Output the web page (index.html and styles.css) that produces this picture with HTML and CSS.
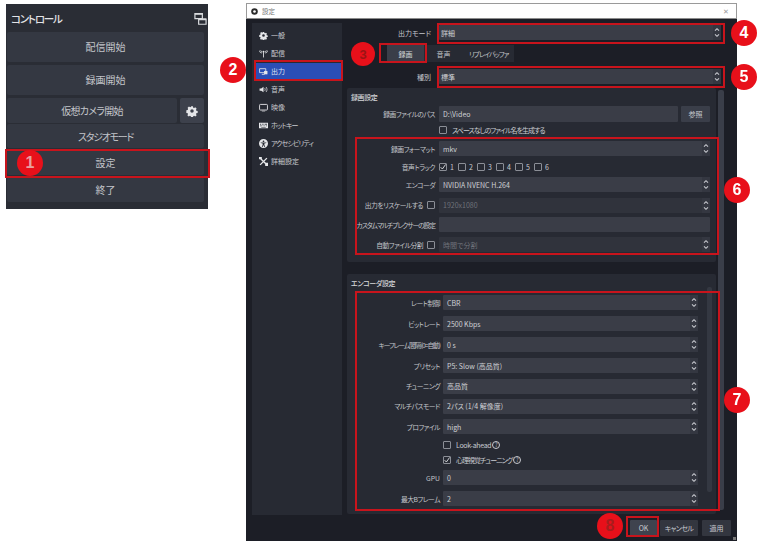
FILE: index.html
```html
<!DOCTYPE html>
<html lang="ja">
<head>
<meta charset="utf-8">
<title>設定</title>
<link rel="stylesheet" href="styles.css">
</head>
<body>
<svg class="defs" width="0" height="0" aria-hidden="true">
  <symbol id="i-gear" viewBox="0 0 16 16"><path fill="currentColor" fill-rule="evenodd" d="M6.6 1h2.8l.4 2 1.3.6 1.8-1.1 2 2-1.1 1.8.6 1.3 2 .4v2.8l-2 .4-.6 1.3 1.1 1.8-2 2-1.8-1.1-1.3.6-.4 2H6.600l-.4-2-1.300-.6-1.800 1.100-2-2 1.100-1.800-.6-1.300-2-.4V6.800l2-.4.6-1.300L1.500 3.300l2-2 1.800 1.100 1.300-.6zM8 5.400a2.600 2.600 0 1 0 0 5.200 2.600 2.600 0 0 0 0-5.200z" transform="translate(.8 .8) scale(.9)"/></symbol>
  <symbol id="i-ant" viewBox="0 0 16 16"><path fill="none" stroke="currentColor" stroke-width="1.500" d="M8 6v9M1 3c0 3 2 4 4 4M15 3c0 3-2 4-4 4M3 2.500c0 1.500 1 2.500 2 2.500M13 2.500c0 1.500-1 2.500-2 2.500"/><circle cx="8" cy="5" r="1.800" fill="currentColor"/></symbol>
  <symbol id="i-out" viewBox="0 0 16 16"><path fill="none" stroke="currentColor" stroke-width="1.500" d="M1 3h11v7H1zM5 13h5"/><path fill="currentColor" d="M9 7h6v6H9z"/></symbol>
  <symbol id="i-audio" viewBox="0 0 16 16"><path fill="currentColor" d="M1 6h3l4-3v10L4 10H1z"/><path fill="none" stroke="currentColor" stroke-width="1.300" d="M10 5.500c1.300 1.500 1.300 3.500 0 5M12.500 3.500c2.300 2.500 2.300 6.500 0 9"/></symbol>
  <symbol id="i-video" viewBox="0 0 16 16"><rect x="1" y="2.500" width="14" height="10" rx="1.500" fill="none" stroke="currentColor" stroke-width="1.600"/><path stroke="currentColor" d="M5 14.500h6"/></symbol>
  <symbol id="i-key" viewBox="0 0 16 16"><path fill="currentColor" fill-rule="evenodd" d="M0 3h16v10H0zm2 2v1.500h1.500V5zm3 0v1.500h1.500V5zm3 0v1.500h1.500V5zm3 0v1.500h3V5zM2 8v1.500h3V8zm4.500 0v1.500H8V8zm3 0v1.500H11V8zm3 0v1.500H14V8zM4 11v1h8v-1z"/></symbol>
  <symbol id="i-acc" viewBox="0 0 16 16"><path fill="currentColor" fill-rule="evenodd" d="M8 0a8 8 0 1 1 0 16A8 8 0 0 1 8 0zm0 2.500a1.500 1.500 0 1 0 0 3 1.500 1.500 0 0 0 0-3zM3 6v1.300l3.500.7v2L5 14l1.300.4L8 10.800l1.700 3.600L11 14l-1.500-4V8l3.500-.7V6z"/></symbol>
  <symbol id="i-tool" viewBox="0 0 16 16"><path fill="none" stroke="currentColor" stroke-width="2.400" d="M2 14L14 2M3 3l10 10"/><path fill="currentColor" d="M0 0h5v4H0zM11 10h5v6h-5z"/></symbol>
  <symbol id="i-check" viewBox="0 0 10 10"><path fill="none" stroke="currentColor" stroke-width="1.100" d="M2 5.200l2.200 2.300L8.300 1.800"/></symbol>
  <symbol id="i-spin" viewBox="0 0 8 12"><path fill="none" stroke="currentColor" stroke-width="1.100" d="M2 4.200L4 2.200 6 4.200M2 7.800l2 2 2-2"/></symbol>
  <symbol id="i-docks" viewBox="0 0 14 14"><path fill="none" stroke="currentColor" stroke-width="1.300" d="M1 1.700h8v5.500H1z"/><path fill="currentColor" d="M1 1h8v2H1zM5 7h8v2H5z"/><path fill="none" stroke="currentColor" stroke-width="1.300" d="M5 7.700h8v5.500H5z"/></symbol>
  <symbol id="i-obs" viewBox="0 0 16 16"><circle cx="8" cy="8" r="7.500" fill="currentColor"/><circle cx="8" cy="8" r="3" fill="#fff"/></symbol>
</svg>

<div class="page">
  <section class="controls">
    <header class="controls-head">
      <span>コントロール</span>
      <svg class="docks"><use href="#i-docks"/></svg>
    </header>
    <button class="cbtn cbtn-tall">配信開始</button>
    <button class="cbtn cbtn-tall">録画開始</button>
    <div class="cam-row">
      <button class="cbtn cam-main">仮想カメラ開始</button>
      <button class="cbtn cam-gear"><svg class="gear"><use href="#i-gear"/></svg></button>
    </div>
    <button class="cbtn cbtn-mid cbtn-short">スタジオモード</button>
    <button class="cbtn cbtn-mid">設定</button>
    <button class="cbtn cbtn-mid">終了</button>
  </section>

  <section class="dialog">
    <header class="titlebar">
      <svg class="obs"><use href="#i-obs"/></svg>
      <span class="title">設定</span>
      <span class="close">✕</span>
    </header>
    <div class="dialog-body">
      <div class="dialog-main">
        <nav class="side">
          <div class="nav"><svg class="nav-i"><use href="#i-gear"/></svg>一般</div>
          <div class="nav"><svg class="nav-i"><use href="#i-ant"/></svg>配信</div>
          <div class="nav nav-on"><svg class="nav-i"><use href="#i-out"/></svg>出力</div>
          <div class="nav"><svg class="nav-i"><use href="#i-audio"/></svg>音声</div>
          <div class="nav"><svg class="nav-i"><use href="#i-video"/></svg>映像</div>
          <div class="nav nav-kana"><svg class="nav-i"><use href="#i-key"/></svg>ホットキー</div>
          <div class="nav nav-kana"><svg class="nav-i"><use href="#i-acc"/></svg>アクセシビリティ</div>
          <div class="nav"><svg class="nav-i"><use href="#i-tool"/></svg>詳細設定</div>
        </nav>

        <main class="content">
          <div class="top-row">
            <label class="top-label">出力モード</label>
            <div class="field sel field-top">詳細<svg class="spin"><use href="#i-spin"/></svg></div>
          </div>
          <div class="tabs">
            <span class="tab tab-on">録画</span>
            <span class="tab">音声</span>
            <span class="tab">リプレイバッファ</span>
          </div>
          <div class="top-row top-row-2">
            <label class="top-label">種別</label>
            <div class="field sel field-top">標準<svg class="spin"><use href="#i-spin"/></svg></div>
          </div>

          <div class="scroller">
            <div class="groups">
              <section class="group group-rec">
                <h3 class="group-title">録画設定</h3>
                <div class="form form-rec">
                  <label class="lbl">録画ファイルのパス</label>
                  <div class="path-row"><div class="field">D:\Video</div><button class="small-btn">参照</button></div>
                  <span></span>
                  <label class="check-line check-jp"><i class="cb"></i>スペースなしのファイル名を生成する</label>
                  <label class="lbl">録画フォーマット</label>
                  <div class="field sel">mkv<svg class="spin"><use href="#i-spin"/></svg></div>
                  <label class="lbl">音声トラック</label>
                  <div class="tracks">
                    <span class="trk"><i class="cb"><svg class="tick"><use href="#i-check"/></svg></i>1</span>
                    <span class="trk"><i class="cb"></i>2</span>
                    <span class="trk"><i class="cb"></i>3</span>
                    <span class="trk"><i class="cb"></i>4</span>
                    <span class="trk"><i class="cb"></i>5</span>
                    <span class="trk"><i class="cb"></i>6</span>
                  </div>
                  <label class="lbl">エンコーダ</label>
                  <div class="field sel">NVIDIA NVENC H.264<svg class="spin"><use href="#i-spin"/></svg></div>
                  <label class="lbl">出力をリスケールする<i class="cb cb-lbl"></i></label>
                  <div class="field sel off">1920x1080<svg class="spin"><use href="#i-spin"/></svg></div>
                  <label class="lbl lbl-long">カスタムマルチプレクサーの設定</label>
                  <div class="field"></div>
                  <label class="lbl">自動ファイル分割<i class="cb cb-lbl"></i></label>
                  <div class="field sel off">時間で分割<svg class="spin"><use href="#i-spin"/></svg></div>
                </div>
              </section>

              <section class="group group-enc">
                <h3 class="group-title">エンコーダ設定</h3>
                <div class="enc-wrap">
                  <div class="form form-enc">
                    <label class="lbl">レート制御</label>
                    <div class="field sel">CBR<svg class="spin"><use href="#i-spin"/></svg></div>
                    <label class="lbl">ビットレート</label>
                    <div class="field sel">2500 Kbps<svg class="spin"><use href="#i-spin"/></svg></div>
                    <label class="lbl lbl-long">キーフレーム間隔 (0=自動)</label>
                    <div class="field sel">0 s<svg class="spin"><use href="#i-spin"/></svg></div>
                    <label class="lbl">プリセット</label>
                    <div class="field sel">P5: Slow (高品質)<svg class="spin"><use href="#i-spin"/></svg></div>
                    <label class="lbl">チューニング</label>
                    <div class="field sel">高品質<svg class="spin"><use href="#i-spin"/></svg></div>
                    <label class="lbl">マルチパスモード</label>
                    <div class="field sel">2パス (1/4 解像度)<svg class="spin"><use href="#i-spin"/></svg></div>
                    <label class="lbl">プロファイル</label>
                    <div class="field sel">high<svg class="spin"><use href="#i-spin"/></svg></div>
                    <span></span>
                    <label class="check-line"><i class="cb"></i>Look-ahead<span class="help">?</span></label>
                    <span></span>
                    <label class="check-line check-jp"><i class="cb"><svg class="tick"><use href="#i-check"/></svg></i>心理視覚チューニング<span class="help">?</span></label>
                    <label class="lbl lbl-plain">GPU</label>
                    <div class="field sel">0<svg class="spin"><use href="#i-spin"/></svg></div>
                    <label class="lbl">最大Bフレーム</label>
                    <div class="field sel">2<svg class="spin"><use href="#i-spin"/></svg></div>
                  </div>
                  <div class="inner-scroll"></div>
                </div>
              </section>
            </div>
            <div class="outer-scroll"></div>
          </div>
        </main>
      </div>
      <footer class="foot">
        <button class="small-btn foot-ok">OK</button>
        <button class="small-btn foot-cancel">キャンセル</button>
        <button class="small-btn foot-apply">適用</button>
      </footer>
    </div>
    <i class="grip"></i>
  </section>

  <i class="box box-1"></i>
  <i class="box box-2"></i>
  <i class="box box-3"></i>
  <i class="box box-4"></i>
  <i class="box box-5"></i>
  <i class="box box-6"></i>
  <i class="box box-7"></i>
  <i class="box box-8"></i>
  <b class="badge badge-1">1</b>
  <b class="badge badge-2">2</b>
  <b class="badge badge-3">3</b>
  <b class="badge badge-4">4</b>
  <b class="badge badge-5">5</b>
  <b class="badge badge-6">6</b>
  <b class="badge badge-7">7</b>
  <b class="badge badge-8">8</b>
</div>
</body>
</html>
```
FILE: styles.css
```css
* { box-sizing: border-box; }
html, body { margin: 0; padding: 0; background: #fff; }
body { font-family: "Noto Sans CJK JP", "Noto Sans", sans-serif; font-feature-settings: "palt"; color: #c9cbd0; }
.defs { position: absolute; }
.page {
  position: relative; width: 760px; height: 551px; overflow: hidden;
  display: flex; align-items: flex-start; padding: 3px 0 0 6px;
  filter: blur(.4px);
}
button { font: inherit; font-feature-settings: "palt"; color: inherit; border: 0; padding: 0; }
svg { display: block; }

/* controls dock */
.controls {
  width: 202px; height: 205px; margin-top: 1px; background: #2a2d35;
  padding: 0 4px 5px 1px; display: flex; flex-direction: column; flex: none;
}
.controls-head {
  height: 28px; flex: none; display: flex; align-items: center; justify-content: space-between;
  font-size: 10.500px; font-weight: 500; color: #e2e3e6; padding: 0 0 0 4px; margin-right: -3px;
  letter-spacing: -1.200px;
}
.docks { width: 13px; height: 13px; color: #d8dadd; }
.cbtn { background: #3a3e49; border-radius: 2px; color: #c3c5ca; font-size: 10px; display: flex; align-items: center; justify-content: center; }
.cbtn-tall { height: 30px; margin-bottom: 3px; background: #343842; }
.cbtn-mid { height: 25px; margin-bottom: 2px; background: #343842; }
.cbtn-short { height: 24px; letter-spacing: -1.300px; }
.cam-row { display: flex; gap: 3px; height: 26px; margin-bottom: 1px; }
.cam-main { flex: 1; background: #343842; letter-spacing: -.7px; }
.cam-gear { width: 24px; background: #3d414c; }
.gear { width: 12px; height: 12px; color: #e4e5e8; }

/* dialog */
.dialog {
  position: relative; width: 491px; height: 538px; margin-left: 38px; flex: none;
  background: #1c1e26; display: flex; flex-direction: column;
}
.titlebar {
  height: 16px; flex: none; background: #fff; border: 1px solid #9a9a9a; border-bottom-color: #8c8c8c;
  display: flex; align-items: center; padding: 0 7px 0 4px; color: #777; font-size: 6.500px;
}
.obs { width: 7px; height: 7px; color: #2b2b2b; margin-right: 4px; }
.title { flex: 1; }
.close { font-size: 7px; color: #9a9a9a; }
.dialog-body { flex: 1; display: flex; flex-direction: column; min-height: 0; }
.dialog-main { flex: 1; display: flex; min-height: 0; padding: 4px 0 0 6px; }

.side { width: 90px; height: 492px; background: #272a33; padding: 3px 1px 0 2px; flex: none; }
.nav { height: 18px; display: flex; align-items: center; padding-left: 5px; font-size: 7px; color: #c9cbd0; white-space: nowrap; }
.nav-kana { letter-spacing: -.9px; }
.nav-on { background: #2a4eb6; height: 16px; margin: 1px 0; color: #dfe3f2; }
.nav-i { width: 9px; height: 9px; margin-right: 3px; color: #e6e7ea; flex: none; }

.content { flex: 1; min-width: 0; margin-left: 3px; display: flex; flex-direction: column; font-size: 7px; }
.top-row { display: grid; grid-template-columns: 86px 282px; column-gap: 8px; height: 15px; margin-top: 2px; align-items: center; flex: none; }
.top-row-2 { margin-top: 7px; }
.top-label { text-align: right; color: #c4c6cb; }
.tabs { display: flex; height: 17px; margin-top: 5px; padding-left: 42px; flex: none; }
.tab { height: 17px; display: flex; align-items: center; padding: 0 9px; background: #272a33; white-space: nowrap; color: #c0c2c7; font-size: 7px; }
.tab:nth-child(2) { width: 39px; padding: 0; justify-content: center; }
.tab:nth-child(3) { width: 51px; padding: 0; justify-content: center; letter-spacing: -1.100px; }
.tab-on { background: #3a3e49; color: #d4d6da; width: 37px; justify-content: center; }

.field {
  height: 15px; background: #3a3d47; display: flex; align-items: center; padding-left: 4px;
  position: relative; min-width: 0; color: #cfd1d5; border-radius: 1px; font-size: 7px;
}
.field-top { padding-left: 2px; }
.off { color: #6f727a; background: #30333c; }
.spin { position: absolute; right: 0; top: 0; width: 8px; height: 100%; padding: 0; color: #c8cad0; background: #343741; }

.scroller { display: flex; flex: none; height: 426px; margin-top: 4px; }
.groups { width: 369px; margin-left: 2px; flex: none; }
.outer-scroll { width: 6px; height: 420px; margin: 2px 0 0 2px; background: #3a3e49; border-radius: 2px; }
.group { background: #272a33; border-radius: 2px; }
.group-rec { height: 174px; padding: 4px 6px 0 10px; margin-bottom: 12px; }
.group-enc { height: 240px; padding: 4px 0 0 10px; }
.group-title { margin: 0; font-size: 7px; font-weight: 500; color: #d6d7da; height: 10px; line-height: 10px; margin-left: -6px; letter-spacing: -.4px; }

.form { display: grid; align-items: center; column-gap: 4px; }
.form-rec { grid-template-columns: 78px 271px; grid-template-rows: 16px 16px 21px 15px 21px 20px 19px 21px; margin-top: 4px; margin-left: 0; }
.form-rec > .field, .path-row .field { height: 15px; }
.lbl { text-align: right; white-space: nowrap; color: #c3c5ca; display: flex; justify-content: flex-end; align-items: center; font-size: 6.800px; letter-spacing: -.5px; }
.lbl-long { letter-spacing: -1.100px; }
.lbl-plain { letter-spacing: 0; }
.path-row { display: flex; gap: 3px; }
.path-row .field { flex: 1; height: 16px; }
.small-btn { background: #3a3e49; font-size: 7px; color: #c8cad0; border-radius: 1px; }
.path-row .small-btn { width: 29px; height: 16px; }

.check-line { display: flex; align-items: center; white-space: nowrap; font-size: 7px; color: #c8cad0; letter-spacing: -.3px; }
.check-jp { letter-spacing: -1px; }
.cb {
  width: 8px; height: 8px; border: 1px solid #8b8e96; background: transparent; display: inline-block;
  margin-right: 5px; flex: none; position: relative; border-radius: 1px;
}
.cb-lbl { margin: 0 0 0 4px; }
.tick { position: absolute; inset: -1px; width: 8px; height: 8px; color: #e6e7ea; }
.tracks { display: flex; gap: 5px; }
.trk { display: flex; align-items: center; width: 14px; font-size: 7px; }
.trk .cb { margin-right: 3px; }

.enc-wrap { display: flex; margin-top: 4px; }
.form-enc { grid-template-columns: 83px 255px; grid-template-rows: 21px 21px 21px 21px 20px 20px 21px 15px 15px 21px 21px; column-gap: 3px; margin-top: 0; }
.form-enc .field { height: 15px; }
.inner-scroll { width: 5px; height: 205px; margin: -5px 0 0 9px; background: #343842; border-radius: 2px; flex: none; }
.help { width: 8px; height: 8px; border: 1px solid #c8cad0; border-radius: 50%; font-size: 5.500px; line-height: 6px; letter-spacing: 0; text-align: center; margin-left: 1px; }

.foot { height: 26px; flex: none; display: flex; align-items: center; padding: 0 6px 1px 384px; gap: 3px; }
.foot .small-btn { height: 16px; }
.foot-ok { width: 27px; background: #3f434e; }
.foot-cancel { width: 38px; background: #33363f; letter-spacing: -.6px; }
.foot-apply { width: 29px; margin-left: 1px; background: #33363f; }
.grip { position: absolute; right: 1px; bottom: 1px; width: 3px; height: 3px; background: #777; }

/* annotation overlays */
.box { position: absolute; border: 2px solid #c8141c; }
.box-1 { left: 5px; top: 149px; width: 205px; height: 29px; }
.box-2 { left: 254px; top: 60px; width: 89px; height: 21px; }
.box-3 { left: 379px; top: 43px; width: 48px; height: 20px; }
.box-4 { left: 437px; top: 23px; width: 288px; height: 21px; }
.box-5 { left: 437px; top: 66px; width: 288px; height: 22px; }
.box-6 { left: 355px; top: 137px; width: 364px; height: 118px; }
.box-7 { left: 355px; top: 291px; width: 365px; height: 220px; }
.box-8 { left: 626px; top: 516px; width: 33px; height: 21px; }
.badge {
  position: absolute; border-radius: 50%; background: #e8101a; color: #fff;
  display: flex; align-items: center; justify-content: center;
  font-family: "Liberation Sans", sans-serif; font-weight: 700; font-size: 16px;
}
.badge-1 { left: 17px; top: 150px; width: 26px; height: 26px; color: #e9a0a0; }
.badge-2 { left: 220px; top: 57px; width: 26px; height: 26px; }
.badge-3 { left: 351px; top: 42px; width: 24px; height: 24px; color: #9c1414; font-size: 13px; }
.badge-4 { left: 731px; top: 20px; width: 26px; height: 26px; }
.badge-5 { left: 731px; top: 64px; width: 26px; height: 26px; }
.badge-6 { left: 724px; top: 177px; width: 26px; height: 26px; }
.badge-7 { left: 724px; top: 387px; width: 26px; height: 26px; }
.badge-8 { left: 597px; top: 513px; width: 26px; height: 26px; color: #a81d1d; }
```
